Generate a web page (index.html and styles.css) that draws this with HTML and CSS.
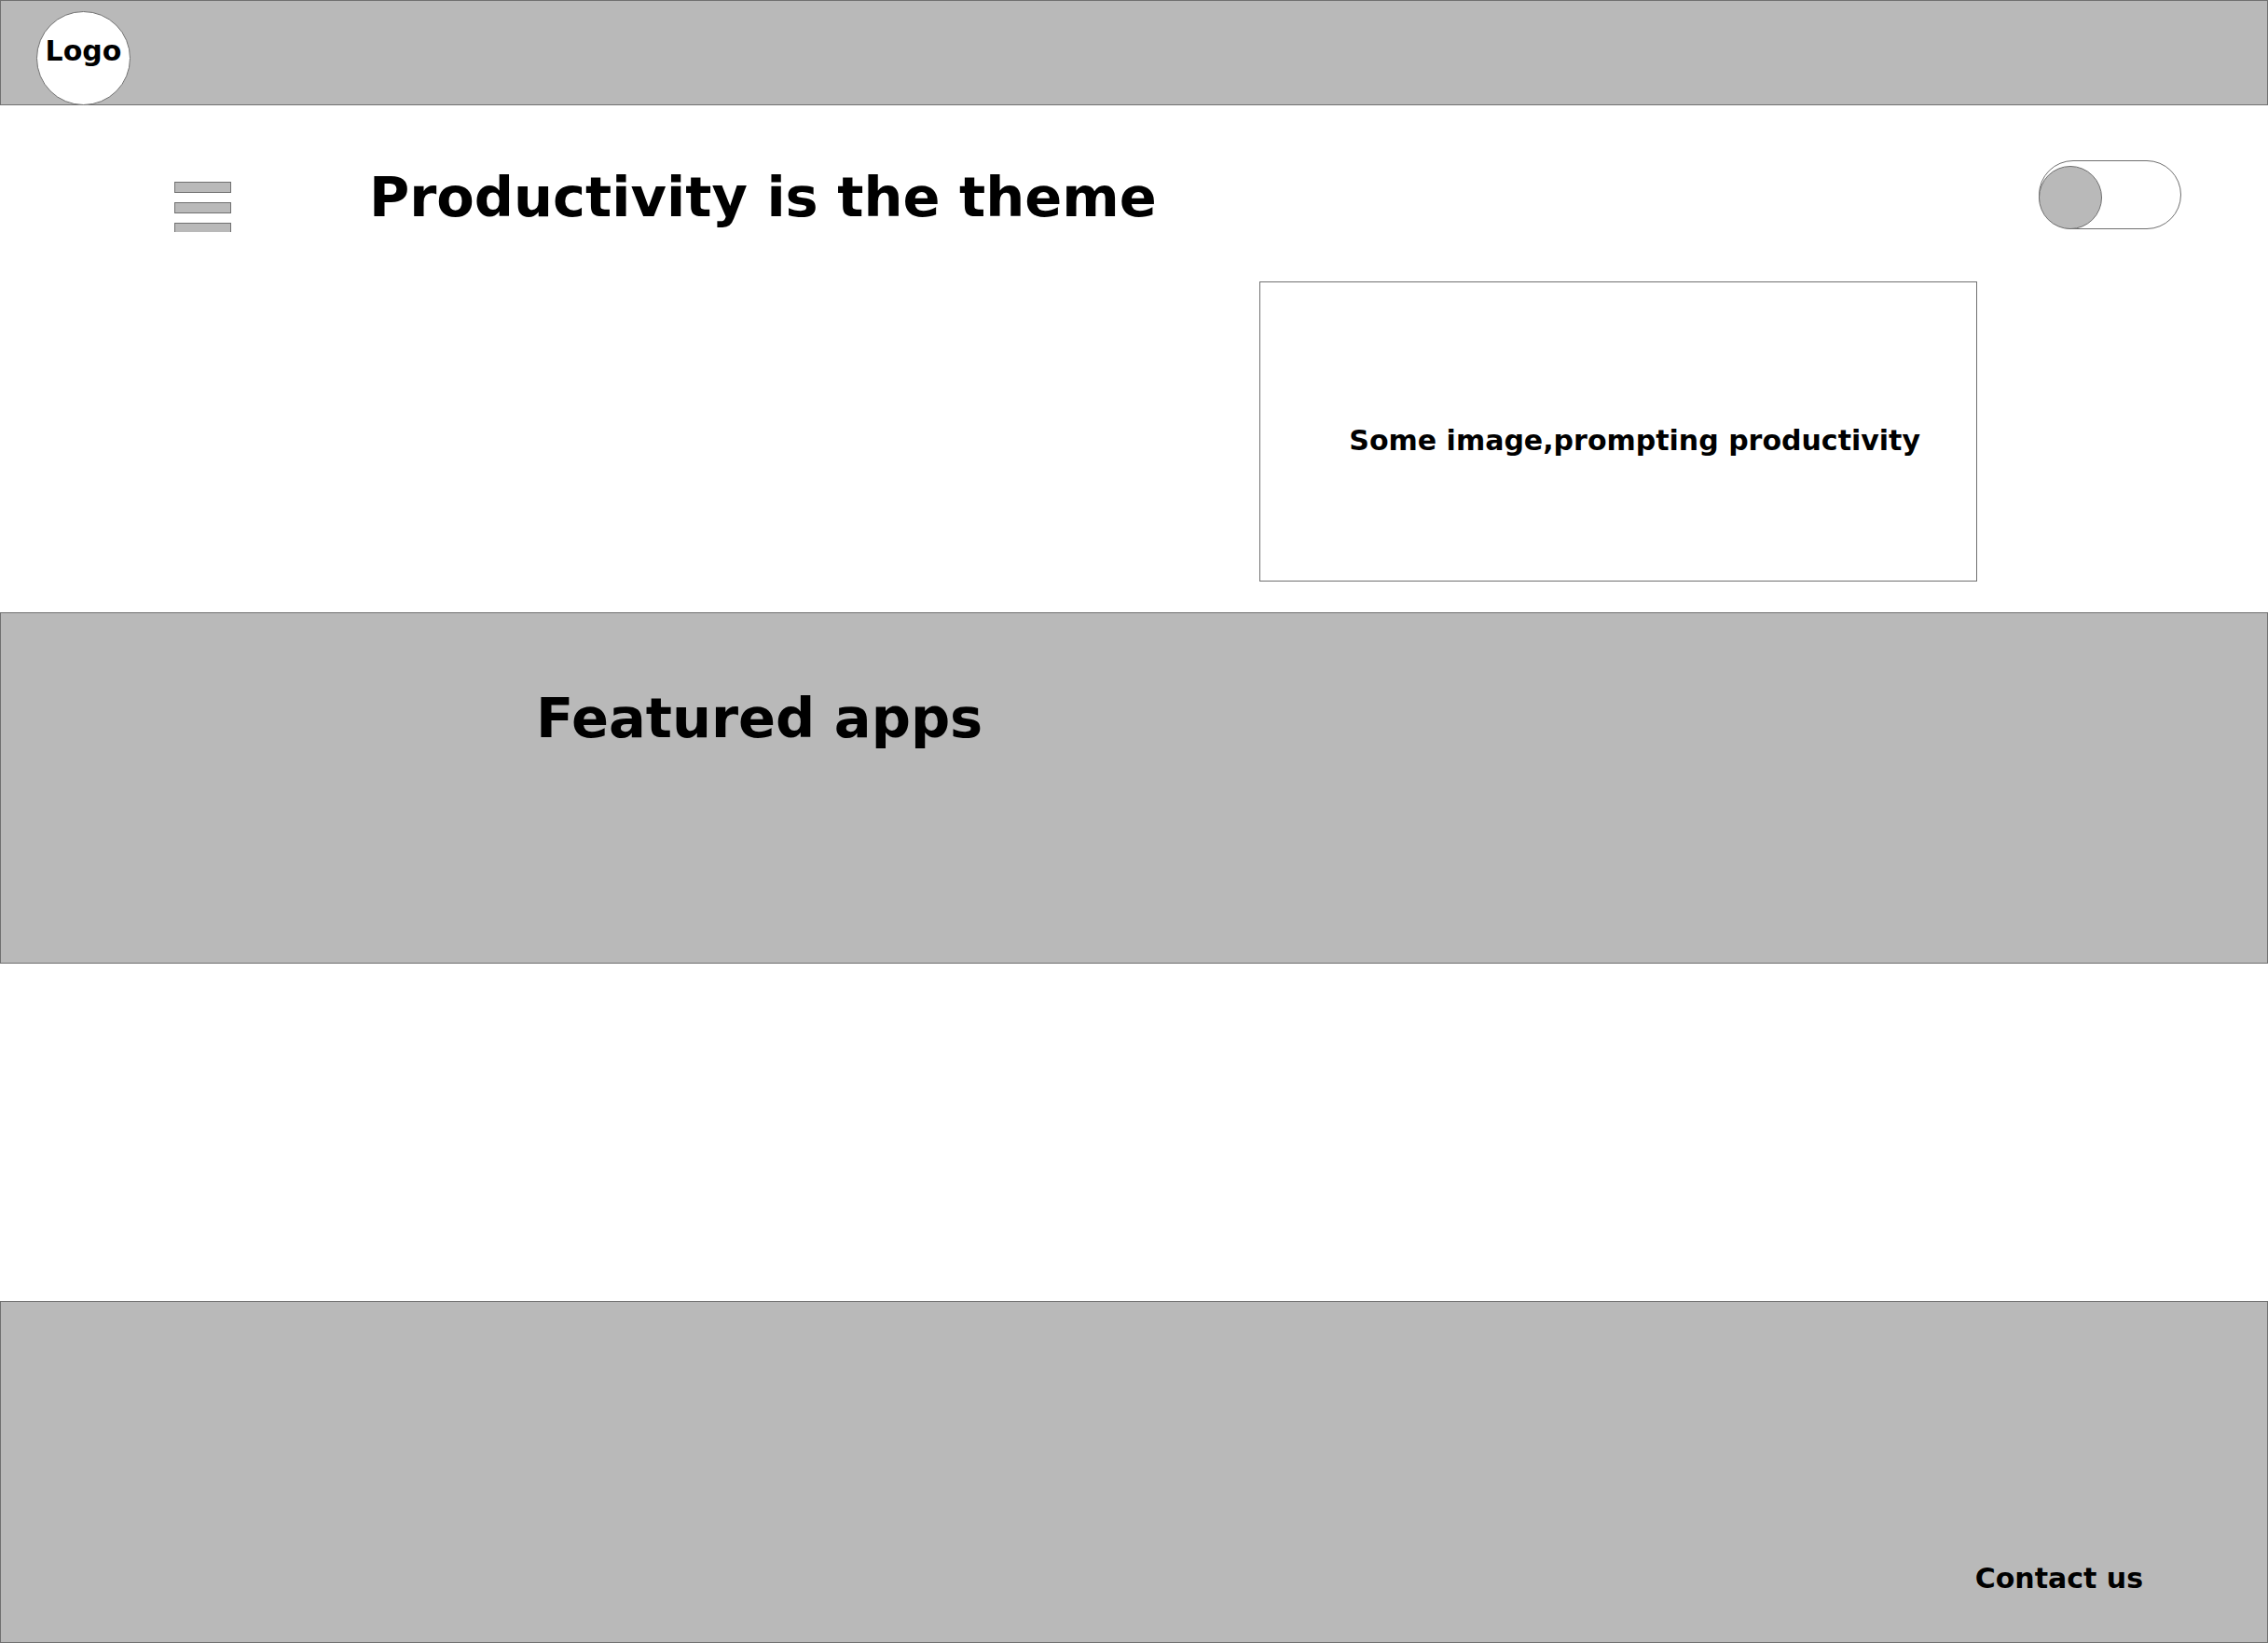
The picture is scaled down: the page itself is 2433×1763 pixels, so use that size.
FILE: index.html
```html
<!DOCTYPE html>
<html lang="en">
<head>
  <meta charset="utf-8">
  <meta name="viewport" content="width=device-width, initial-scale=1">
  <title>Productivity</title>
  <link rel="stylesheet" href="styles.css">
</head>
<body>
  <header class="band site-header">
    <a class="logo" href="#">Logo</a>
  </header>
  <main>
    <section class="intro">
      <div class="intro-bar">
        <button class="menu" type="button" aria-label="Menu">
          <span class="menu-line"></span>
          <span class="menu-line"></span>
          <span class="menu-line menu-line-cut"></span>
        </button>
        <h1 class="title">Productivity is the theme</h1>
        <input class="toggle" type="checkbox" role="switch" aria-label="Theme">
      </div>
      <figure class="picture">
        <figcaption>Some image,prompting productivity</figcaption>
      </figure>
    </section>
    <section class="band featured">
      <h2 class="title">Featured apps</h2>
    </section>
    <section class="content"></section>
  </main>
  <footer class="band site-footer">
    <a class="contact" href="#">Contact us</a>
  </footer>
</body>
</html>
```

FILE: styles.css
```css
:root {
  --fill: #b9b9b9;
  --line: #707070;
}

*,
*::before {
  box-sizing: border-box;
}

body {
  margin: 0;
  background: #fff;
  color: #000;
  font: bold 30px/36px Verdana, "DejaVu Sans", sans-serif;
}

a {
  color: inherit;
  text-decoration: none;
}

.band {
  background: var(--fill);
  border: 1px solid var(--line);
}

.title {
  margin: 0;
  font-size: 59px;
  line-height: 72px;
}

/* Header */
.site-header {
  display: flex;
  padding: 11px 38px 0;
}

.logo {
  display: flex;
  justify-content: center;
  width: 101px;
  height: 101px;
  margin-bottom: -1px;
  padding-top: 24px;
  border: 1px solid var(--line);
  border-radius: 50%;
  background: #fff;
}

/* Intro */
.intro {
  padding: 59px 93px 33px 187px;
}

.intro-bar {
  display: flex;
  align-items: flex-start;
}

.intro-bar .title {
  margin: 4px auto 0 148px;
}

.menu {
  display: flex;
  flex-direction: column;
  gap: 10px;
  width: 61px;
  margin: 23px 0 0;
  padding: 0;
  border: 0;
  background: none;
  cursor: pointer;
}

.menu-line {
  width: 100%;
  height: 12px;
  background: var(--fill);
  border: 1px solid var(--line);
}

.menu-line-cut {
  height: 10px;
  border-bottom: 0;
}

.toggle {
  appearance: none;
  display: flex;
  align-items: flex-end;
  flex: none;
  width: 153px;
  height: 74px;
  margin: 0;
  border: 1px solid var(--line);
  border-radius: 37px;
  background: #fff;
  cursor: pointer;
}

.toggle::before {
  content: "";
  width: 68px;
  height: 68px;
  margin: -1px;
  border: 1px solid var(--line);
  border-radius: 50%;
  background: var(--fill);
}

.toggle:checked {
  justify-content: flex-end;
}

.picture {
  display: flex;
  align-items: center;
  justify-content: flex-end;
  max-width: 770px;
  min-height: 322px;
  margin: 53px 219px 0 auto;
  padding: 20px 60px 0 20px;
  border: 1px solid var(--line);
}

/* Sections */
.featured {
  min-height: 377px;
  padding: 77px 574px;
}

.content {
  min-height: 362px;
}

/* Footer */
.site-footer {
  display: flex;
  justify-content: flex-end;
  padding: 279px 133px 50px;
}
```
